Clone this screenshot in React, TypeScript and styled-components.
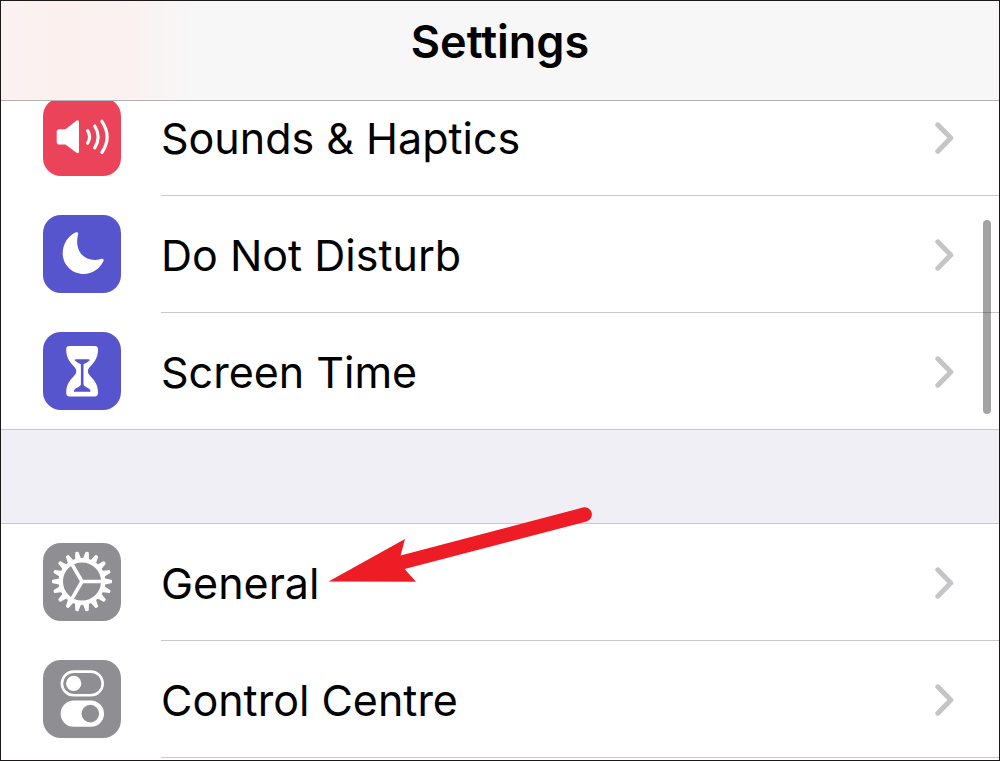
import React from "react";
import styled, { createGlobalStyle } from "styled-components";

const GlobalStyle = createGlobalStyle`
  *, *::before, *::after { box-sizing: border-box; }
  body {
    margin: 0;
    background: #ffffff;
    color: #000000;
    font-family: Inter, "Liberation Sans", sans-serif;
  }
`;

const Screen = styled.div`
  position: relative;
  display: flex;
  flex-direction: column;
  min-height: 100vh;
  border: 1px solid #1c181a;
  background: #ffffff;
`;

const Header = styled.header`
  display: flex;
  align-items: center;
  justify-content: center;
  height: 100px;
  padding-bottom: 18px;
  border-bottom: 1px solid #b4b2b3;
  background: linear-gradient(90deg, #faf2f1 0, #fbf0ee 60px, #faf1f0 130px, #f7f7f7 190px);
`;

const Title = styled.h1`
  margin: 0;
  font-size: 45px;
  line-height: 56px;
  font-weight: 600;
`;

const List = styled.main`
  flex: 1;
  overflow: hidden;
`;

const Group = styled.ul<{ $scrolled?: boolean }>`
  margin: ${(p) => (p.$scrolled ? "-22px 0 0" : "0")};
  padding: 0;
  list-style: none;
`;

const Spacer = styled.div`
  height: 95px;
  border-top: 1px solid #c8c7cc;
  border-bottom: 1px solid #c8c7cc;
  background: #f0eff5;
`;

const RowLink = styled.a`
  display: flex;
  padding-left: 42px;
  color: inherit;
  text-decoration: none;
`;

const IconTile = styled.span<{ $color: string }>`
  flex: none;
  width: 78px;
  height: 78px;
  margin: 19px 40px 19px 0;
  border-radius: 18px;
  background: ${(p) => p.$color};

  svg {
    display: block;
  }
`;

const RowBody = styled.span<{ $divided: boolean }>`
  flex: 1;
  display: flex;
  align-items: center;
  justify-content: space-between;
  height: ${(p) => (p.$divided ? "117px" : "116px")};
  padding: 2px 44px 0 0;
  border-bottom: ${(p) => (p.$divided ? "1px solid #c8c7cc" : "none")};
`;

const Label = styled.span`
  font-size: 43px;
  line-height: 56px;
`;

const ScrollThumb = styled.div`
  position: absolute;
  top: 219px;
  right: 8px;
  width: 8px;
  height: 194px;
  border-radius: 4px;
  background: rgba(0, 0, 0, 0.36);
`;

const Pointer = styled.svg`
  position: absolute;
  top: 499px;
  left: 319px;
`;

const Chevron = () => (
  <svg width="20" height="34" viewBox="0 0 20 34" fill="none" aria-hidden="true">
    <path d="M2.8 3.8 15.8 17 2.8 30.2" stroke="#c5c5c7" strokeWidth="5" strokeLinecap="round" strokeLinejoin="round" />
  </svg>
);

const SpeakerIcon = () => (
  <svg width="78" height="78" viewBox="0 0 78 78" fill="none" aria-hidden="true">
    <path
      d="M16.5 31.2H22.5L33.2 22.8Q36 21 36 24.5V53Q36 56.3 33.2 54.6L22.5 46.6H16.5Q13.7 46.6 13.7 43.8V34Q13.7 31.2 16.5 31.2Z"
      fill="#fff"
    />
    <path
      d="M44.6 32.6Q48.6 38.9 44.6 45.2M51.7 28Q58.6 38.9 51.7 49.8M58.9 23.3Q69.3 38.9 58.9 54.5"
      stroke="#fff"
      strokeWidth="3.2"
      strokeLinecap="round"
    />
  </svg>
);

const MoonIcon = () => (
  <svg width="78" height="78" viewBox="0 0 78 78" aria-hidden="true">
    <path
      d="M32.5 17.5C34.4 16.7 35.6 17.8 35.1 19.6C33.2 26.4 34 33.7 38 38.7C42.5 44.4 50.5 46.2 57.6 44C59.8 43.2 61.3 44.5 60.4 46.3C56.6 54.3 49 59 40.8 59C29.2 59 19.7 49.9 19.7 38.3C19.7 29.3 24.8 20.9 32.5 17.5Z"
      fill="#fff"
    />
  </svg>
);

const HourglassIcon = () => (
  <svg width="78" height="78" viewBox="0 0 78 78" aria-hidden="true">
    <path
      d="M26.5 14H51.7Q55 14 55 17.3C55 23.5 53.3 27.8 49.5 32C46.4 35.4 44.9 36.6 44.9 39.2C44.9 41.8 46.4 43 49.5 46.4C53.3 50.6 55 54.8 55 61Q55 64.4 51.7 64.4H26.5Q23.2 64.4 23.2 61C23.2 54.8 24.9 50.6 28.7 46.4C31.8 43 33.3 41.8 33.3 39.2C33.3 36.6 31.8 35.4 28.7 32C24.9 27.8 23.2 23.5 23.2 17.3Q23.2 14 26.5 14Z"
      fill="#fff"
    />
    <path
      d="M33 27.2H45.4Q47.6 27.2 46.2 28.8Q44.5 30.7 40.5 32.3V52.5C41 54.5 45.5 55.8 47 57.7Q48.5 59.8 46.3 59.8H32.1Q29.9 59.8 31.4 57.7C33 55.8 37.4 54.5 37.9 52.5V32.3Q33.9 30.7 32.2 28.8Q30.8 27.2 33 27.2Z"
      fill="#5655ce"
    />
  </svg>
);

const GearIcon = () => (
  <svg width="78" height="78" viewBox="0 0 78 78" fill="none" aria-hidden="true">
    <g transform="translate(39 38.5)">
      {Array.from({ length: 18 }, (_, i) => (
        <path key={i} transform={`rotate(${i * 20})`} d="M22-3.2 29.3-1.7Q30-1.5 30-.8V.8Q30 1.5 29.3 1.7L22 3.2Z" fill="#fff" />
      ))}
      <circle r="21.2" stroke="#fff" strokeWidth="4.4" />
      {[0, 120, 240].map((angle) => (
        <path key={angle} transform={`rotate(${angle})`} d="M0 0H21" stroke="#fff" strokeWidth="3.6" strokeLinecap="round" />
      ))}
    </g>
  </svg>
);

const TogglesIcon = () => (
  <svg width="78" height="78" viewBox="0 0 78 78" fill="none" aria-hidden="true">
    <rect x="18.9" y="11.6" width="40.8" height="23.6" rx="11.8" stroke="#fff" strokeWidth="2.6" />
    <circle cx="30.7" cy="23.4" r="7.6" fill="#fff" />
    <rect x="17.6" y="40.6" width="43.4" height="26.2" rx="13.1" fill="#fff" />
    <circle cx="47.3" cy="53.6" r="8.8" fill="#8e8e93" />
  </svg>
);

type Item = { label: string; color: string; Icon: React.ComponentType };

const alerts: Item[] = [
  { label: "Sounds & Haptics", color: "#eb445a", Icon: SpeakerIcon },
  { label: "Do Not Disturb", color: "#5655ce", Icon: MoonIcon },
  { label: "Screen Time", color: "#5655ce", Icon: HourglassIcon },
];

const system: Item[] = [
  { label: "General", color: "#8e8e93", Icon: GearIcon },
  { label: "Control Centre", color: "#8e8e93", Icon: TogglesIcon },
];

const Row = ({ item, divided }: { item: Item; divided: boolean }) => (
  <li>
    <RowLink href="#">
      <IconTile $color={item.color}>
        <item.Icon />
      </IconTile>
      <RowBody $divided={divided}>
        <Label>{item.label}</Label>
        <Chevron />
      </RowBody>
    </RowLink>
  </li>
);

export default function App() {
  return (
    <>
      <GlobalStyle />
      <Screen>
        <Header>
          <Title>Settings</Title>
        </Header>
        <List>
          <Group $scrolled>
            {alerts.map((item, i) => (
              <Row key={item.label} item={item} divided={i < alerts.length - 1} />
            ))}
          </Group>
          <Spacer />
          <Group>
            {system.map((item) => (
              <Row key={item.label} item={item} divided />
            ))}
          </Group>
        </List>
        <ScrollThumb />
        <Pointer width="280" height="90" viewBox="0 0 280 90" aria-hidden="true">
          <path
            d="M8.5 81.6 85 39 80.6 55.4 262.8 7.6A7 7 0 0 1 266.6 21.4L84.6 69 96 81.8Z"
            fill="#ee1c25"
          />
        </Pointer>
      </Screen>
    </>
  );
}
